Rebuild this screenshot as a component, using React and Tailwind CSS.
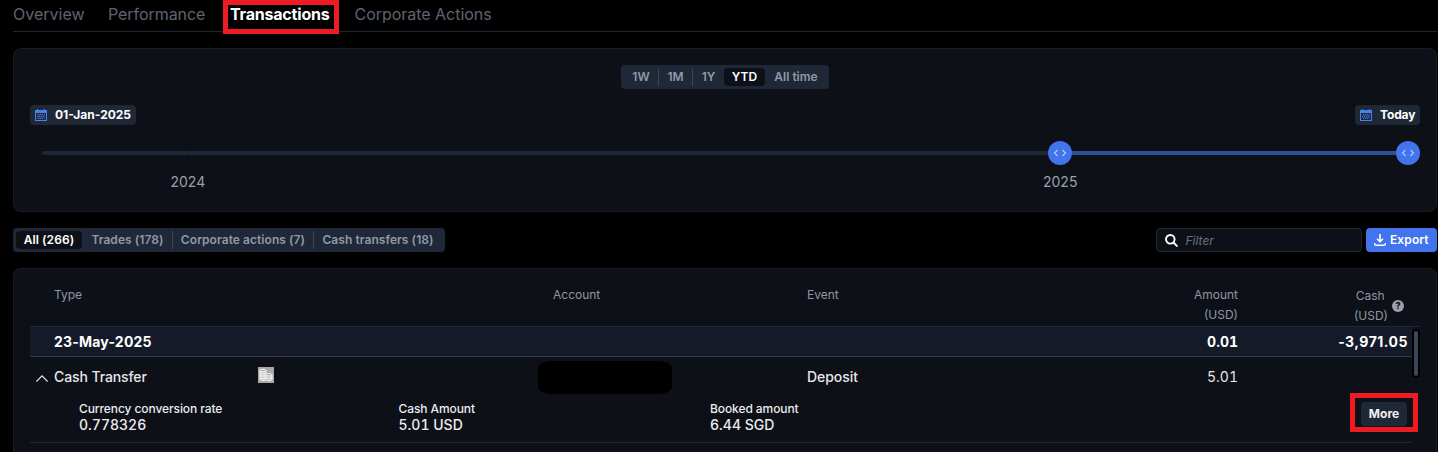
import React from 'react';

function CalendarIcon() {
  return (
    <svg width="12" height="12" viewBox="0 0 12 12" className="shrink-0" fill="#4a80f0" shapeRendering="crispEdges">
      <path d="M0 1h2V0h1v1h6V0h1v1h2v10.5H0zM1 4v7h10V4z" fillRule="evenodd" />
      <path d="M3 5h1v1H3zM5 5h1v1H5zM7 5h1v1H7zM9 5h1v1H9zM2 7h1v1H2zM4 7h1v1H4zM6 7h1v1H6zM8 7h1v1H8zM3 9h1v1H3zM5 9h1v1H5zM7 9h1v1H7z" opacity="0.8" />
      <path d="M2 5h8v5H2z" opacity="0.25" />
    </svg>
  );
}

function Handle() {
  return (
    <span className="grid size-6 shrink-0 place-items-center rounded-full bg-[#4274ed]">
      <svg width="14" height="8" viewBox="0 0 14 8" fill="none" stroke="#b4c9fb" strokeWidth="1.2">
        <path d="M4.5 1L1.5 4l3 3M9.5 1l3 3-3 3" />
      </svg>
    </span>
  );
}

function Marked({ className, children }) {
  return <div className={`absolute border-[5px] border-[#ed1c24] ${className}`}>{children}</div>;
}

function Segment({ active, divider, className, children }) {
  return (
    <span className={`flex h-[18px] items-center justify-center whitespace-nowrap ${active ? 'rounded bg-[#0d1017] text-white' : 'text-[#8f99a8]'} ${divider ? 'border-r border-[#3b4657]' : ''} ${className}`}>
      {children}
    </span>
  );
}

function Detail({ label, value, className }) {
  return (
    <div className={`shrink-0 whitespace-nowrap text-[#ececee] ${className}`}>
      <div className="text-[12px] font-medium leading-4 tracking-[-0.09px]">{label}</div>
      <div className="text-[14px] font-medium leading-4 tabular-nums">{value}</div>
    </div>
  );
}

export default function App() {
  return (
    <div className="flex h-[452px] w-[1438px] flex-col overflow-hidden bg-black pl-[13px] pr-px font-['Inter',sans-serif] text-white">
      <nav className="relative flex h-8 shrink-0 border-b border-[#1f2733] text-[16px] leading-[29px] whitespace-nowrap text-[#5f6470]">
        <span className="w-[95px]">Overview</span>
        <span className="w-[122px] tracking-[-0.06px]">Performance</span>
        <span className="w-[124.5px] font-bold tracking-[-0.2px] text-white">Transactions</span>
        <span className="tracking-[-0.03px]">Corporate Actions</span>
        <Marked className="left-[210px] top-0 h-[34px] w-[116px]" />
      </nav>

      <section className="mt-4 flex h-[164px] shrink-0 flex-col rounded-lg border border-[#171c27] bg-[#0d1017] px-4 pt-4">
        <div className="ml-[591px] flex h-6 w-[208px] items-center rounded bg-[#1f2836] px-[3px] text-[12px] font-semibold">
          <Segment divider className="w-[35px]">1W</Segment>
          <Segment divider className="w-[34px]">1M</Segment>
          <Segment className="w-[31px]">1Y</Segment>
          <Segment active className="w-[41px]">YTD</Segment>
          <Segment className="w-[61px] pl-px">All time</Segment>
        </div>
        <div className="mt-4 flex h-5 justify-between text-[12px] font-bold whitespace-nowrap">
          <span className="flex w-[106px] items-center gap-2 rounded bg-[#1f2836] pl-[5px]"><CalendarIcon />01-Jan-2025</span>
          <span className="flex w-[65px] items-center gap-2 rounded bg-[#1f2836] pl-[5px] tracking-[-0.15px]"><CalendarIcon />Today</span>
        </div>
        <div className="mt-4 flex h-6 items-center">
          <div className="ml-3 flex h-1 w-[1006px] rounded-l-full bg-[#1f2836]"><span className="ml-[145px] w-px bg-[#171e2a]" /></div>
          <Handle />
          <div className="h-1 flex-1 bg-[#305097]" />
          <Handle />
        </div>
        <div className="mt-[7px] flex text-[14px] leading-[19px] text-[#9aa0a9]">
          <span className="ml-[140.5px] w-[872.5px]">2024</span>
          <span>2025</span>
        </div>
      </section>

      <div className="mt-4 flex h-6 shrink-0 items-center text-[12px] font-semibold">
        <div className="flex h-6 w-[432px] items-center rounded bg-[#1f2836] px-[3px] tracking-[0.06px]">
          <Segment active className="w-[66px]">All (266)</Segment>
          <Segment divider className="w-[91px] pl-px">Trades (178)</Segment>
          <Segment divider className="w-[141px]">Corporate actions (7)</Segment>
          <Segment className="w-[128px]">Cash transfers (18)</Segment>
        </div>
        <div className="ml-auto flex h-6 w-[206px] items-center rounded border border-[#1f2836] bg-[#0d1017] pl-2">
          <svg width="13" height="13" viewBox="0 0 13 13" fill="none" stroke="white" strokeWidth="1.9"><circle cx="5.3" cy="5.3" r="4.3" /><path d="M8.5 8.5l4 4" /></svg>
          <span className="ml-[7.5px] mt-px font-normal italic text-[#6b7280]">Filter</span>
        </div>
        <div className="ml-1 flex h-6 w-[71px] items-center rounded bg-[#4274ed] pl-2">
          <svg width="12" height="12" viewBox="0 0 12 12" fill="none" stroke="white" strokeWidth="1.6"><path d="M6 0v7.5M3 4.7l3 3 3-3" /><path d="M0.7 9v1q0 1.2 1.2 1.2h8.2q1.2 0 1.2-1.2V9" strokeWidth="1.4" /></svg>
          <span className="ml-1 tracking-[0.1px]">Export</span>
        </div>
      </div>

      <section className="mt-4 flex h-[200px] shrink-0 flex-col rounded-t-lg border border-b-0 border-[#171c27] bg-[#0d1017] px-4">
        <div className="flex h-[58px] shrink-0 border-b border-[#1f2836] pt-4 text-[12px] leading-5 text-[#8f97a3]">
          <span className="ml-6 w-[499px]">Type</span>
          <span className="w-[254px]">Account</span>
          <span className="w-[331px]">Event</span>
          <span className="w-[100px] text-right">Amount<br />(USD)</span>
          <div className="ml-auto mr-4 flex items-center pt-px">
            <span className="text-right leading-5">Cash&nbsp;<br />(USD)</span>
            <span className="ml-1 grid size-3 place-items-center rounded-full bg-[#9ba0ac] text-[9px] font-extrabold leading-3 text-[#0d1017]">?</span>
          </div>
        </div>
        <div className="flex">
          <div className="w-[1382px]">
            <div className="flex h-[30px] items-center border-b border-[#313b4f] bg-[#141a27] text-[14px] font-bold">
              <span className="ml-6 tracking-[0.2px]">23-May-2025</span>
              <span className="ml-auto tabular-nums">0.01</span>
              <span className="w-[174px] pr-1 text-right tracking-[0.5px]">-3,971.05</span>
            </div>
            <div className="flex h-[41px] items-center text-[14px] font-medium whitespace-nowrap text-[#e7e7e9]">
              <svg className="ml-1.5 mt-px" width="12" height="7" viewBox="0 0 12 7" fill="none" stroke="#eeeeee" strokeWidth="1.1"><path d="M0.4 6.5L6 0.8l5.6 5.7" /></svg>
              <span className="mb-0.5 ml-1.5 w-[204px] tracking-[-0.1px]">Cash Transfer</span>
              <svg className="mb-[5px]" width="16" height="16" viewBox="0 0 16 16" fill="none" stroke="white" strokeWidth="0.9">
                <path d="M0 0h16v16H0z" fill="#a9a9a9" stroke="none" />
                <path d="M2 3.5v8.7c0 .7 1.4 1.2 3 1.2h2.4V9L8 3.5z" fill="#c4c4c4" stroke="none" />
                <ellipse cx="5" cy="3.5" rx="3" ry="1.2" fill="#a9a9a9" />
                <path d="M2 3.5v8.7c0 .7 1.4 1.2 3 1.2h2M8 3.5v3M2 5.7c0 .7 1.4 1.2 3 1.2s3-.5 3-1.2M2 7.9C2 8.6 3.4 9 5 9h2M2 10.1c0 .7 1.4 1.2 3 1.2h2" />
                <path d="M7.4 7.8v4.5c0 .7 1.5 1.3 3.3 1.3s3.3-.6 3.3-1.3V7.8z" fill="#c4c4c4" />
                <ellipse cx="10.7" cy="7.8" rx="3.3" ry="1.2" fill="#a9a9a9" />
                <path d="M7.4 10c0 .7 1.5 1.3 3.3 1.3S14 10.7 14 10" />
              </svg>
              <span className="mb-px ml-[264px] h-[33px] w-[134px] rounded-[14px/7px] bg-black" />
              <span className="mb-0.5 ml-[135px] tracking-[-0.05px]">Deposit</span>
              <span className="mb-0.5 ml-auto mr-[174px] font-normal tabular-nums">5.01</span>
            </div>
            <div className="relative flex h-[45px] border-b border-[#1f2836] pl-[49px] pt-[3px]">
              <Detail className="w-[319.5px]" label="Currency conversion rate" value="0.778326" />
              <Detail className="w-[311.5px]" label="Cash Amount" value="5.01 USD" />
              <Detail label="Booked amount" value="6.44 SGD" />
              <Marked className="-top-[5px] left-[1320px] h-[39px] w-[68px]">
                <span className="ml-1.5 mt-1 grid h-6 w-[46px] place-items-center rounded bg-[#1f2836] text-[12px] font-bold text-[#f1f1f1]">More</span>
              </Marked>
            </div>
          </div>
          <div className="mt-0.5 h-[49px] w-2 rounded-full bg-black p-0.5"><div className="h-full rounded-full bg-[#3b465a]" /></div>
        </div>
      </section>
    </div>
  );
}
